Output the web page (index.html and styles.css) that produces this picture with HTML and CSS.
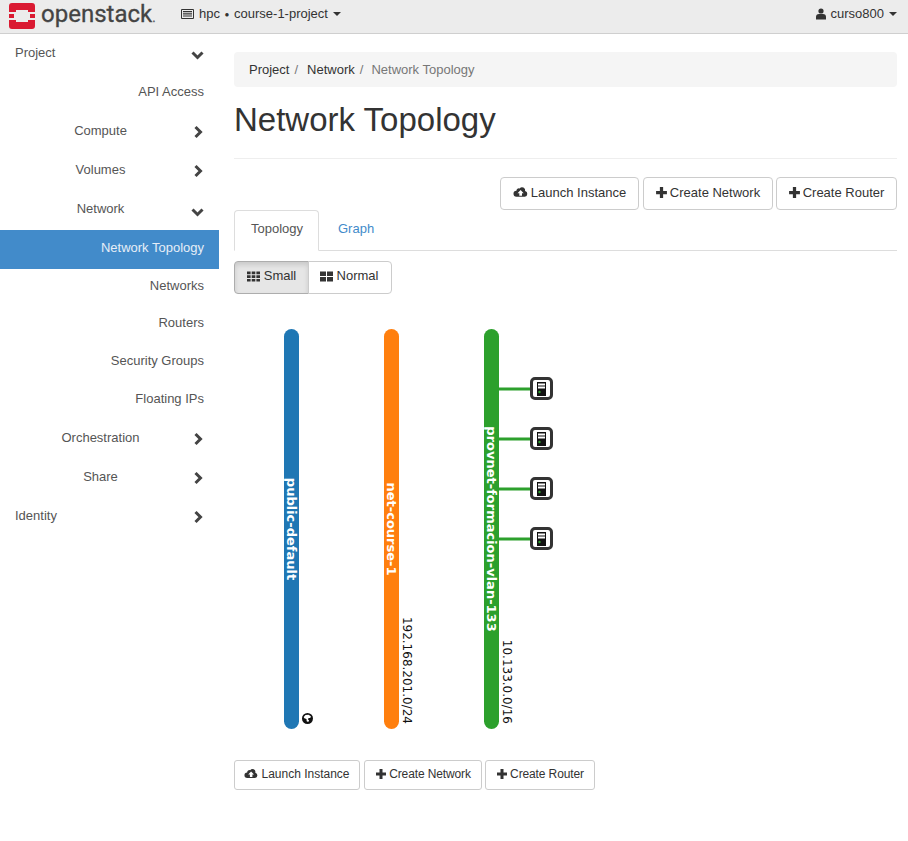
FILE: index.html
```html
<!DOCTYPE html>
<html lang="en">
<head>
<meta charset="utf-8">
<title>Network Topology</title>
<link rel="stylesheet" href="styles.css">
</head>
<body>
<svg class="defs" width="0" height="0" aria-hidden="true">
  <symbol id="i-cloud" viewBox="0 0 14 12"><path d="M11.3 4.7A2.9 2.9 0 0 0 6.2 2.2 2.2 2.2 0 0 0 3.2 4.4 2.7 2.7 0 0 0 3.3 10H11a2.7 2.7 0 0 0 .3-5.3zM8.4 6.6V9H5.9V6.6H4.2L7.1 3.6 10 6.6z" fill-rule="evenodd" fill="currentColor"/></symbol>
  <symbol id="i-plus" viewBox="0 0 12 12"><path d="M4.5 1h3v3.5H11v3H7.5V11h-3V7.5H1v-3h3.5z" fill="currentColor"/></symbol>
  <symbol id="i-chev-d" viewBox="0 0 14 14"><path d="M1.5 5.5l5 5 5-5" fill="none" stroke="currentColor" stroke-width="3"/></symbol>
  <symbol id="i-chev-r" viewBox="0 0 14 14"><path d="M4.5 2l5 5-5 5" fill="none" stroke="currentColor" stroke-width="3"/></symbol>
</svg>

<header class="topbar">
  <div class="brand">
    <svg class="brand-mark" viewBox="0 0 26 26" width="26" height="26" aria-hidden="true">
      <path d="M3 0H23a3 3 0 0 1 3 3V9H19V7H7V9H0V3a3 3 0 0 1 3-3zM0 11H5V15H0zM21 11H26V15H21zM0 17H7V19H19V17H26V23a3 3 0 0 1-3 3H3a3 3 0 0 1-3-3z" fill="#da1a32"/>
    </svg>
    <span class="brand-name">openstack<span class="brand-dot">.</span></span>
  </div>
  <div class="project-pick">
    <svg class="project-icon" viewBox="0 0 13 10" width="13" height="10" aria-hidden="true">
      <path d="M1 0H12a1 1 0 0 1 1 1V9a1 1 0 0 1-1 1H1a1 1 0 0 1-1-1V1a1 1 0 0 1 1-1zM1 1V9H12V1zM2 2H11V3.2H2zM2 4.2H11V5.4H2zM2 6.4H11V7.6H2z" fill-rule="evenodd" fill="#333"/>
    </svg>
    <span>hpc <span class="sep-dot">●</span> course-1-project</span>
    <span class="caret"></span>
  </div>
  <div class="user-pick">
    <svg class="user-icon" viewBox="0 0 10 12" width="10" height="12" aria-hidden="true">
      <circle cx="5" cy="3" r="2.6" fill="#333"/><path d="M0 11.5V9a3 3 0 0 1 3-3h4a3 3 0 0 1 3 3v2.5z" fill="#333"/>
    </svg>
    <span>curso800</span>
    <span class="caret"></span>
  </div>
</header>

<div class="page">
  <nav class="sidebar">
    <div class="nav-row nav-top"><span class="nav-label-left">Project</span><svg class="chev"><use href="#i-chev-d"/></svg></div>
    <div class="nav-row nav-leaf">API Access</div>
    <div class="nav-row nav-group"><span class="nav-label">Compute</span><svg class="chev"><use href="#i-chev-r"/></svg></div>
    <div class="nav-row nav-group"><span class="nav-label">Volumes</span><svg class="chev"><use href="#i-chev-r"/></svg></div>
    <div class="nav-row nav-group"><span class="nav-label">Network</span><svg class="chev chev-low"><use href="#i-chev-d"/></svg></div>
    <div class="nav-row nav-leaf nav-active">Network Topology</div>
    <div class="nav-row nav-leaf nav-sub">Networks</div>
    <div class="nav-row nav-leaf nav-sub">Routers</div>
    <div class="nav-row nav-leaf nav-sub">Security Groups</div>
    <div class="nav-row nav-leaf nav-sub">Floating IPs</div>
    <div class="nav-row nav-group nav-low"><span class="nav-label">Orchestration</span><svg class="chev"><use href="#i-chev-r"/></svg></div>
    <div class="nav-row nav-group nav-low"><span class="nav-label">Share</span><svg class="chev"><use href="#i-chev-r"/></svg></div>
    <div class="nav-row nav-top nav-low"><span class="nav-label-left">Identity</span><svg class="chev"><use href="#i-chev-r"/></svg></div>
  </nav>

  <main class="content">
    <ol class="breadcrumb">
      <li class="crumb">Project</li>
      <li class="crumb-sep">/</li>
      <li class="crumb">Network</li>
      <li class="crumb-sep">/</li>
      <li class="crumb crumb-current">Network Topology</li>
    </ol>
    <h1 class="title">Network Topology</h1>

    <div class="actions">
      <button class="btn btn-launch"><svg class="btn-icon-cloud"><use href="#i-cloud"/></svg>Launch Instance</button>
      <button class="btn btn-net"><svg class="btn-icon-plus"><use href="#i-plus"/></svg>Create Network</button>
      <button class="btn btn-router"><svg class="btn-icon-plus"><use href="#i-plus"/></svg>Create Router</button>
    </div>

    <div class="tabs">
      <div class="tab tab-active">Topology</div>
      <div class="tab tab-link">Graph</div>
    </div>

    <div class="toggle">
      <div class="toggle-btn toggle-on">
        <svg class="toggle-icon" viewBox="0 0 13 11" width="13" height="11" aria-hidden="true"><path d="M0 .5H3.6V3.2H0zM4.7 .5H8.3V3.2H4.7zM9.4 .5H13V3.2H9.4zM0 4.2H3.6V6.9H0zM4.7 4.2H8.3V6.9H4.7zM9.4 4.2H13V6.9H9.4zM0 7.9H3.6V10.6H0zM4.7 7.9H8.3V10.6H4.7zM9.4 7.9H13V10.6H9.4z" fill="#333"/></svg>
        Small
      </div>
      <div class="toggle-btn">
        <svg class="toggle-icon" viewBox="0 0 13 11" width="13" height="11" aria-hidden="true"><path d="M0 .5H6V5H0zM7 .5H13V5H7zM0 6H6V10.5H0zM7 6H13V10.5H7z" fill="#333"/></svg>
        Normal
      </div>
    </div>

    <svg class="topology" viewBox="234 304 663 446" width="663" height="446" role="img" aria-label="Network topology diagram">
      <g class="links">
        <path d="M499 389H530M499 439H530M499 489H530M499 539H530"/>
      </g>
      <rect x="284" y="329" width="15" height="400" rx="7.5" fill="#1f77b4"/>
      <rect x="384" y="329" width="15" height="400" rx="7.5" fill="#ff7f0e"/>
      <rect x="484" y="329" width="15" height="400" rx="7.5" fill="#2ca02c"/>

      <text class="net-name" transform="translate(287 529) rotate(90)">public-default</text>
      <text class="net-name" transform="translate(387 529) rotate(90)">net-course-1</text>
      <text class="net-name" transform="translate(487 529) rotate(90)">provnet-formacion-vlan-133</text>

      <text class="net-cidr" transform="translate(403 724) rotate(90)">192.168.201.0/24</text>
      <text class="net-cidr" transform="translate(503 724) rotate(90)">10.133.0.0/16</text>

      <g class="globe">
        <circle cx="307.5" cy="718.5" r="5.5" fill="#111"/>
        <path d="M305.5 715l3-.3 2.4 1.6-.6 1.6-1.6.1-.8 1.3 1.2 1.2-.9 1.6-1.5-.9-.2-2.1-2.2-.8-.6-1.2z" fill="#fff"/>
      </g>

      <g id="server" class="server">
        <rect x="531.5" y="378.5" width="20" height="20" rx="3.5" class="server-box"/>
        <rect x="537" y="382" width="9" height="14" fill="#111"/>
        <rect x="538" y="383.5" width="7" height="2" fill="#fff"/>
        <rect x="538" y="386.5" width="7" height="2" fill="#fff"/>
        <circle cx="539.5" cy="392" r="1.2" fill="#2ca02c"/>
      </g>
      <use href="#server" y="50"/>
      <use href="#server" y="100"/>
      <use href="#server" y="150"/>
    </svg>

    <div class="actions-sm">
      <button class="btn btn-sm btn-sm-launch"><svg class="btn-icon-cloud"><use href="#i-cloud"/></svg>Launch Instance</button>
      <button class="btn btn-sm btn-sm-net"><svg class="btn-icon-plus"><use href="#i-plus"/></svg>Create Network</button>
      <button class="btn btn-sm btn-sm-router"><svg class="btn-icon-plus"><use href="#i-plus"/></svg>Create Router</button>
    </div>
  </main>
</div>
</body>
</html>
```
FILE: styles.css
```css
* { box-sizing: border-box; }

html, body {
  margin: 0;
  padding: 0;
  background: #fff;
  color: #333;
  font: 13px/20px "Liberation Sans", Arial, sans-serif;
}

.defs { position: absolute; }

/* Top bar */
.topbar {
  display: flex;
  align-items: center;
  height: 34px;
  background: #ececec;
  border-bottom: 1px solid #cfcfcf;
  padding: 0 11px 5px 9px;
  font-size: 13px;
  color: #333;
}

.brand { display: flex; align-items: center; gap: 6px; width: 172px; }
.brand-mark { flex: none; margin-top: 3px; }
.brand-name {
  margin-top: 3px;
  font: 400 24px/30px Roboto, sans-serif;
  letter-spacing: 0;
  color: #444;
  white-space: nowrap;
  -webkit-text-stroke: .3px #444;
}
.brand-dot { font-size: 13px; letter-spacing: 0; color: #777; }

.project-pick { display: flex; align-items: center; gap: 5px; }
.sep-dot { margin: 0 1px; font-size: 8px; vertical-align: 1px; }

.user-pick { display: flex; align-items: center; gap: 5px; margin-left: auto; }

.caret {
  width: 0;
  height: 0;
  border-left: 4px solid transparent;
  border-right: 4px solid transparent;
  border-top: 4px solid #333;
}

/* Sidebar */
.page { display: flex; align-items: flex-start; }

.sidebar { flex: none; width: 219px; color: #555; }

.nav-row {
  display: flex;
  height: 39px;
  padding-top: 9px;
}

.nav-top { justify-content: space-between; padding-left: 15px; padding-right: 14px; }
.nav-group { padding-right: 14px; }
.nav-label { flex: none; width: 181px; margin-left: 10px; text-align: center; }
.nav-leaf { justify-content: flex-end; padding-right: 15px; }

.chev { flex: none; width: 14px; height: 14px; margin-top: 4px; color: #444; }
.chev-low { margin-top: 5px; }
.nav-group .chev { margin-left: auto; }

.nav-active {
  margin-top: 1px;
  padding-top: 8px;
  background: #428bca;
  color: #e6eef7;
}

.nav-sub { height: 37.75px; padding-top: 6.6px; }
.nav-low { padding-top: 8px; }

/* Content */
.content {
  flex: 1;
  min-width: 0;
  padding: 18px 11px 0 15px;
}

.breadcrumb {
  display: flex;
  align-items: center;
  height: 35px;
  margin: 0;
  padding: 0 15px;
  list-style: none;
  background: #f5f5f5;
  border-radius: 4px;
}

.crumb-sep { padding: 0 9px 0 5px; color: #777; }
.crumb-current { color: #777; }
.crumb-sep:nth-child(4) { padding-right: 8px; }

.title {
  margin: 13px 0 0;
  height: 58px;
  font-size: 33px;
  line-height: 40px;
  font-weight: 400;
  color: #333;
}

.actions {
  display: flex;
  justify-content: flex-end;
  gap: 3px;
  height: 52px;
  border-top: 1px solid #eee;
  padding-top: 18px;
}

.btn {
  display: inline-flex;
  align-items: center;
  justify-content: center;
  height: 33px;
  padding: 0 0 2px;
  background: #fff;
  border: 1px solid #ccc;
  border-radius: 4px;
  color: #333;
  font: 13px/20px "Liberation Sans", Arial, sans-serif;
}

.btn-launch { width: 139px; margin-right: 1px; }
.btn-net { width: 130px; padding-right: 1px; }
.btn-router { width: 121px; padding-right: 1px; }

.btn-icon-cloud { width: 15px; height: 13px; margin-right: 3px; flex: none; color: #333; }
.btn-icon-plus { width: 13px; height: 13px; margin-right: 2px; flex: none; color: #333; }

/* Tabs */
.tabs {
  display: flex;
  height: 41px;
  border-bottom: 1px solid #ddd;
}

.tab { height: 41px; padding: 8px 16px 0; }
.tab-active {
  width: 85px;
  background: #fff;
  color: #555;
  border: 1px solid #ddd;
  border-bottom-color: #fff;
  border-radius: 4px 4px 0 0;
}
.tab-link { padding-top: 9px; padding-left: 19px; color: #428bca; }

/* Toggle */
.toggle {
  display: inline-flex;
  height: 33px;
  margin-top: 10px;
  vertical-align: top;
}

.toggle-btn {
  display: flex;
  align-items: center;
  justify-content: center;
  gap: 4px;
  width: 84px;
  margin-left: -1px;
  padding: 0 2px 3px 0;
  background: #fff;
  border: 1px solid #ccc;
  border-radius: 0 4px 4px 0;
}

.toggle-on {
  width: 75px;
  margin-left: 0;
  padding-right: 0;
  background: #e6e6e6;
  border-color: #adadad;
  border-radius: 4px 0 0 4px;
  box-shadow: inset 0 3px 5px rgba(0, 0, 0, .125);
}

.toggle-icon { flex: none; }

/* Topology */
.topology { display: block; margin-top: 10px; }
.links path { stroke: #2ca02c; stroke-width: 3; fill: none; }
.net-name {
  font: 700 13px "DejaVu Sans", sans-serif;
  fill: #fff;
  text-anchor: middle;
}
.net-cidr {
  font: 400 12px "DejaVu Sans", sans-serif;
  fill: #111;
  text-anchor: end;
}
.server-box { fill: #fff; stroke: #333; stroke-width: 3; }

/* Bottom buttons */
.actions-sm { display: flex; gap: 3px; margin-top: 10px; }
.btn-sm { height: 30px; padding: 0 0 2px; font-size: 12px; line-height: 18px; border-radius: 3px; }
.btn-sm .btn-icon-cloud { width: 14px; height: 12px; margin-right: 3px; }
.btn-sm .btn-icon-plus { width: 12px; height: 12px; margin-right: 2px; }
.btn-sm-launch { width: 126px; margin-right: 1px; }
.btn-sm-net { width: 118px; letter-spacing: -.12px; }
.btn-sm-router { width: 110px; letter-spacing: -.12px; }
```
